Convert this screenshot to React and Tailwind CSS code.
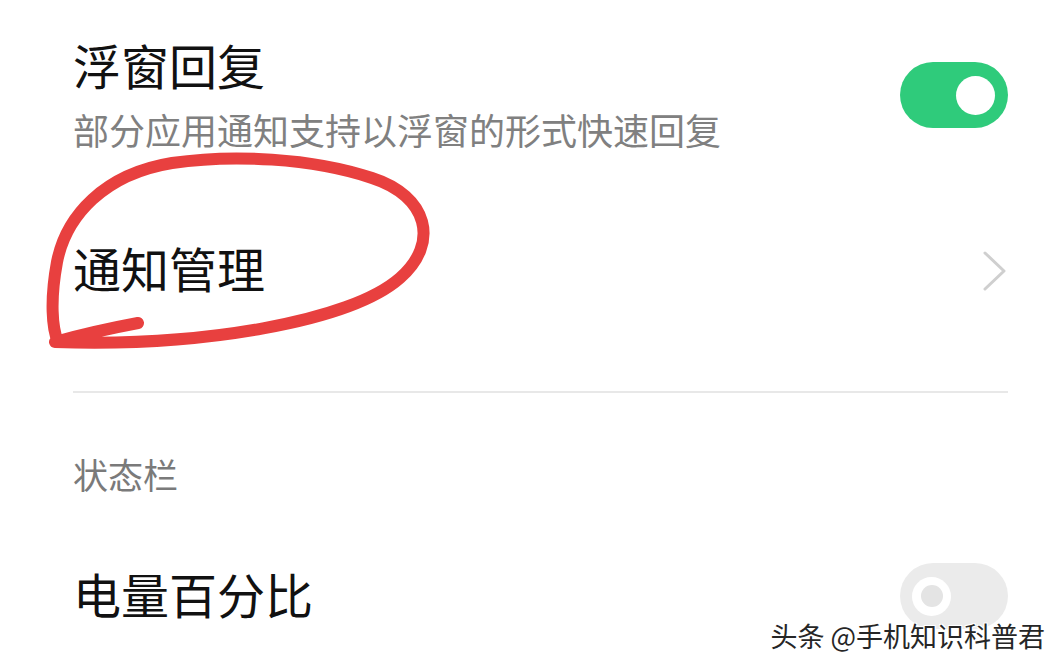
import { useState } from "react"

const cjk = { fontFamily: '"Noto Sans CJK SC", "Noto Sans", sans-serif' }

function Toggle({ on }) {
  return on ? (
    <div className="flex h-[66px] w-[108px] shrink-0 items-center justify-end rounded-full bg-[#2fcb7b] pr-[13px]">
      <div className="h-[39px] w-[39px] rounded-full bg-white" />
    </div>
  ) : (
    <div className="flex h-[66px] w-[108px] shrink-0 items-center rounded-full bg-[#ebebeb] pl-[12px]">
      <div className="flex h-[39px] w-[39px] items-center justify-center rounded-full bg-white">
        <div className="h-[22px] w-[22px] rounded-full bg-[#e4e4e4]" />
      </div>
    </div>
  )
}

function Chevron() {
  return (
    <svg width="26" height="42" viewBox="0 0 26 42" fill="none" className="shrink-0">
      <path d="M3 3 L22 21 L3 39" stroke="#cfcfcf" strokeWidth="3" strokeLinecap="round" strokeLinejoin="round" />
    </svg>
  )
}

export default function App() {
  const [floatReply] = useState(true)
  const [battery] = useState(false)

  return (
    <div className="relative h-[671px] w-[1064px] overflow-hidden bg-white" style={cjk}>
      <div className="flex flex-col pl-[73px] pr-[56px]">
        <div className="flex items-start justify-between pt-[36px]">
          <div className="flex flex-col">
            <p className="text-[48px] leading-[56px] text-[#111]">浮窗回复</p>
            <p className="mt-[15px] text-[36px] leading-[44px] text-[#808080]">部分应用通知支持以浮窗的形式快速回复</p>
          </div>
          <div className="mt-[26px]">
            <Toggle on={floatReply} />
          </div>
        </div>

        <div className="flex h-[240px] items-center justify-between">
          <p className="mb-[8px] text-[48px] leading-[56px] text-[#111]">通知管理</p>
          <Chevron />
        </div>

        <div className="h-[2px] bg-[#e8e8e8]" />

        <p className="mt-[59px] text-[35px] leading-[44px] text-[#7a7a7a]">状态栏</p>

        <div className="mt-[67px] flex h-[66px] items-center justify-between">
          <p className="mb-[6px] text-[48px] leading-[56px] text-[#111]">电量百分比</p>
          <Toggle on={battery} />
        </div>
      </div>

      {/* hand-drawn red circle */}
      <svg className="pointer-events-none absolute left-0 top-0" width="1064" height="671" viewBox="0 0 1064 671" fill="none">
        <path
          d="M138 323 Q95 331 55 342 C200 347 350 322 400 278 C440 243 428 196 372 178 C312 158 232 154 172 163 C104 174 66 216 57 262 C50 300 52 328 58 342"
          stroke="#e8403f"
          strokeWidth="12"
          strokeLinecap="round"
          strokeLinejoin="round"
        />
      </svg>

      <p
        className="absolute right-[19px] top-[620px] text-[27px] leading-[32px] text-[#262626]"
        style={{ textShadow: "1px 1px 0 #fff, -1px -1px 0 #fff, 1px -1px 0 #fff, -1px 1px 0 #fff" }}
      >
        头条 @手机知识科普君
      </p>
    </div>
  )
}
